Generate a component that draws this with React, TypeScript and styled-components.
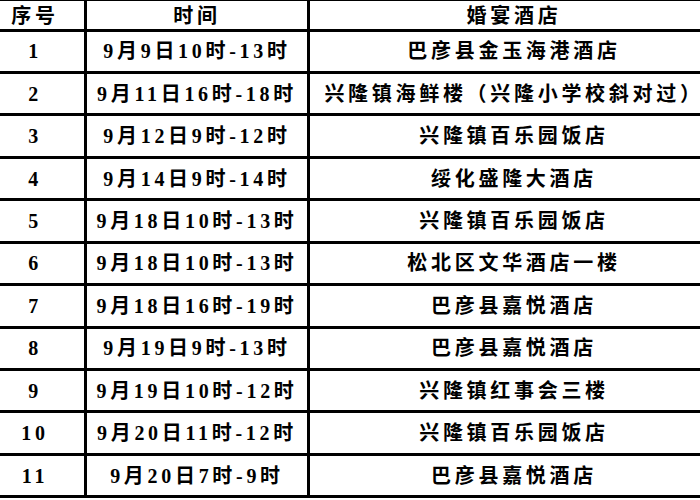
import React from 'react';
import styled, { createGlobalStyle } from 'styled-components';

const GlobalStyle = createGlobalStyle`
  html, body {
    margin: 0;
    padding: 0;
    background: #ffffff;
  }
`;

const Viewport = styled.div`
  width: 700px;
  height: 500px;
  overflow: hidden;
  background: #ffffff;
`;

const Sheet = styled.table`
  border-collapse: collapse;
  table-layout: fixed;
  margin-left: -17px;
  margin-top: -2px;
  width: 735px;
  font-family: "Liberation Serif", "Noto Sans CJK SC", serif;
  font-weight: 700;
  font-size: 20px;
  color: #000000;
  letter-spacing: 3.7px;
`;

const Col = styled.col<{ $w: number }>`
  width: ${(p) => p.$w}px;
`;

const HeadRow = styled.tr`
  height: 30.5px;
`;

const BodyRow = styled.tr`
  height: 42.45px;
`;

const HeadCell = styled.th`
  border: 3px solid #000000;
  padding: 3px 0 0 0;
  text-align: center;
  vertical-align: middle;
  font-weight: 700;
  white-space: nowrap;
  line-height: 1;
`;

const Cell = styled.td`
  border: 3px solid #000000;
  padding: 0;
  text-align: center;
  vertical-align: middle;
  white-space: nowrap;
  line-height: 1;
`;

const rows: [string, string, string][] = [
  ['1', '9月9日10时-13时', '巴彦县金玉海港酒店'],
  ['2', '9月11日16时-18时', '兴隆镇海鲜楼（兴隆小学校斜对过）'],
  ['3', '9月12日9时-12时', '兴隆镇百乐园饭店'],
  ['4', '9月14日9时-14时', '绥化盛隆大酒店'],
  ['5', '9月18日10时-13时', '兴隆镇百乐园饭店'],
  ['6', '9月18日10时-13时', '松北区文华酒店一楼'],
  ['7', '9月18日16时-19时', '巴彦县嘉悦酒店'],
  ['8', '9月19日9时-13时', '巴彦县嘉悦酒店'],
  ['9', '9月19日10时-12时', '兴隆镇红事会三楼'],
  ['10', '9月20日11时-12时', '兴隆镇百乐园饭店'],
  ['11', '9月20日7时-9时', '巴彦县嘉悦酒店'],
];

const App = () => {
  return (
    <>
      <GlobalStyle />
      <Viewport>
        <Sheet>
          <colgroup>
            <Col $w={101} />
            <Col $w={223} />
            <Col $w={411} />
          </colgroup>
          <thead>
            <HeadRow>
              <HeadCell>序号</HeadCell>
              <HeadCell>时间</HeadCell>
              <HeadCell>婚宴酒店</HeadCell>
            </HeadRow>
          </thead>
          <tbody>
            {rows.map(([no, time, place]) => (
              <BodyRow key={no}>
                <Cell>{no}</Cell>
                <Cell>{time}</Cell>
                <Cell>{place}</Cell>
              </BodyRow>
            ))}
          </tbody>
        </Sheet>
      </Viewport>
    </>
  );
};

export default App;
